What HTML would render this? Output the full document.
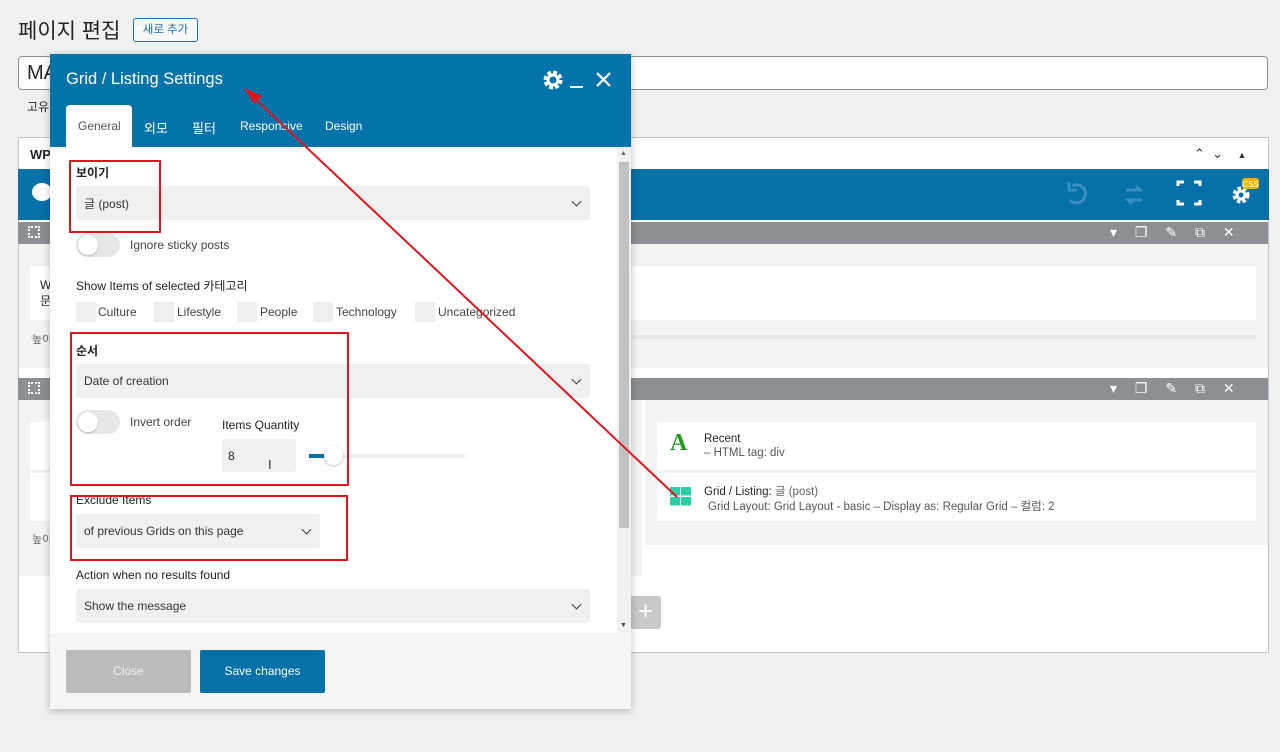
<!DOCTYPE html>
<html><head><meta charset="utf-8"><style>
*{box-sizing:border-box;margin:0;padding:0}
body{width:1280px;height:752px;background:#f0f0f1;font-family:"Liberation Sans","Noto Sans CJK KR",sans-serif;font-size:12px;color:#1d2327;position:relative;overflow:hidden}
.a{position:absolute}
.sel{position:absolute;background:#f0f0f0;border-radius:3px;font-size:12px;color:#333;padding-left:8px;display:flex;align-items:center}
.sel:after{content:"";position:absolute;right:10px;top:50%;width:6px;height:6px;border-right:1.5px solid #333;border-bottom:1.5px solid #333;transform:translateY(-70%) rotate(45deg)}
.lbl{position:absolute;font-size:12px;font-weight:bold;color:#222}
.tog{position:absolute;width:44px;height:24px;border-radius:12px;background:#e6e6e6}
.tog:after{content:"";position:absolute;left:2px;top:2px;width:20px;height:20px;border-radius:50%;background:#fff;box-shadow:0 1px 2px rgba(0,0,0,.2)}
.cb{position:absolute;width:20px;height:20px;background:#eee;top:302px}
.cbt{position:absolute;top:305px;font-size:12px;color:#444}
.red{position:absolute;border:2px solid #e0141e}
.bar{position:absolute;left:18px;width:1250px;height:22px;background:#8c8f94}
.card{position:absolute;background:#fff}
</style></head><body>
<div class="a" style="left:18px;top:15px;font-size:21px;color:#1d2327">페이지 편집</div>
<div class="a" style="left:133px;top:18px;width:65px;height:24px;border:1px solid #2271b1;border-radius:3px;color:#2271b1;font-size:11.5px;text-align:center;line-height:22px;background:#f6f7f7">새로 추가</div>
<div class="a" style="left:18px;top:56px;width:1250px;height:34px;background:#fff;border:1px solid #8c8f94;border-radius:4px;font-size:20px;padding:5px 8px">MA</div>
<div class="a" style="left:27px;top:98px;font-size:12px">고유</div>
<div class="a" style="left:18px;top:137px;width:1251px;height:516px;background:#fff;border:1px solid #c3c4c7"></div>
<div class="a" style="left:30px;top:147px;font-size:13px;font-weight:bold">WPI</div>
<div class="a" style="left:1194px;top:146px;font-size:13px;color:#333">&#8963;&nbsp;&nbsp;&#8964;&nbsp;&nbsp;&nbsp;&nbsp;<span style="font-size:9px">&#9650;</span></div>
<div class="a" style="left:18px;top:169px;width:1251px;height:51px;background:#0571a8"></div>
<div class="a" style="left:32px;top:183px;width:20px;height:18px;border-radius:50%;background:#fff"></div>
<svg class="a" style="left:1060px;top:176px" width="200" height="40" viewBox="0 0 200 40">
<path d="M12 10 A9 9 0 1 1 10 24" fill="none" stroke="#3b8fc0" stroke-width="3"/><path d="M9 6 L9 14 L17 14" fill="none" stroke="#3b8fc0" stroke-width="3"/>
<path d="M66 14 h14 l-4 -4 M82 24 h-14 l4 4" fill="none" stroke="#3b8fc0" stroke-width="3"/>
<path d="M118 10 v-4 h6 M134 6 h6 v4 M140 24 v4 h-6 M124 28 h-6 v-4" fill="none" stroke="#fff" stroke-width="3"/>
<circle cx="181" cy="19" r="6" fill="none" stroke="#fff" stroke-width="5" stroke-dasharray="3 2"/><circle cx="181" cy="19" r="4" fill="none" stroke="#fff" stroke-width="3"/>
<rect x="182" y="2" width="17" height="11" rx="3" fill="#f0b400"/><text x="190.5" y="11" font-size="8" fill="#fff" text-anchor="middle" font-family="Liberation Sans">CSS</text>
</svg>
<div class="bar" style="top:222px"></div>
<div class="bar" style="top:378px"></div>
<div class="a" style="left:28px;top:226px;width:12px;height:12px;border:2px dotted #fff"></div>
<div class="a" style="left:28px;top:382px;width:12px;height:12px;border:2px dotted #fff"></div>
<div class="a" style="left:1110px;top:224px;color:#fff;font-size:14px;word-spacing:14px">▾ ❐ ✎ ⧉ ✕</div>
<div class="a" style="left:1110px;top:380px;color:#fff;font-size:14px;word-spacing:14px">▾ ❐ ✎ ⧉ ✕</div>
<div class="a" style="left:19px;top:244px;width:1249px;height:124px;background:#f3f3f3"></div>
<div class="card" style="left:30px;top:266px;width:1226px;height:54px"></div>
<div class="a" style="left:40px;top:278px;font-size:12px">W<br>문</div>
<div class="a" style="left:30px;top:335px;width:1226px;height:4px;background:#e8e8e8"></div>
<div class="a" style="left:32px;top:331px;font-size:11px;color:#666">높이</div>
<div class="a" style="left:19px;top:400px;width:623px;height:176px;background:#f3f3f3"></div>
<div class="a" style="left:645px;top:400px;width:623px;height:145px;background:#f3f3f3"></div>
<div class="card" style="left:30px;top:422px;width:600px;height:48px"></div>
<div class="card" style="left:30px;top:473px;width:600px;height:48px"></div>
<div class="a" style="left:32px;top:531px;font-size:11px;color:#666">높이</div>
<div class="card" style="left:657px;top:422px;width:599px;height:48px"></div>
<div class="card" style="left:657px;top:473px;width:599px;height:48px"></div>
<div class="a" style="left:670px;top:430px;font-family:'Liberation Serif',serif;font-weight:bold;font-size:24px;color:#1f9a1f">A</div>
<div class="a" style="left:704px;top:433px;font-size:11.5px">Recent</div>
<div class="a" style="left:704px;top:447px;font-size:11.5px;color:#555">– HTML tag: div</div>
<svg class="a" style="left:670px;top:487px" width="22" height="19"><rect x="0" y="0" width="10" height="8.5" fill="#2bcfa5"/><rect x="11" y="0" width="10" height="8.5" fill="#2bcfa5"/><rect x="0" y="10" width="10" height="8.5" fill="#2bcfa5"/><rect x="11" y="10" width="10" height="8.5" fill="#2bcfa5"/></svg>
<div class="a" style="left:704px;top:483px;font-size:11.5px">Grid / Listing: <span style="color:#666">글 (post)</span></div>
<div class="a" style="left:708px;top:498px;font-size:11.5px;color:#555">Grid Layout: Grid Layout - basic – Display as: Regular Grid – 컬럼: 2</div>
<div class="a" style="left:630px;top:596px;width:31px;height:33px;background:#c8c8c8;border-radius:3px;color:#fff;font-size:26px;text-align:center;line-height:31px">+</div>
<div class="a" style="left:50px;top:54px;width:581px;height:655px;background:#f5f5f5;box-shadow:0 2px 8px rgba(0,0,0,.25)"></div>
<div class="a" style="left:50px;top:54px;width:581px;height:93px;background:#0473aa"></div>
<div class="a" style="left:66px;top:70px;font-size:16.5px;color:#fff">Grid / Listing Settings</div>
<svg class="a" style="left:542px;top:68px" width="75" height="24"><circle cx="11" cy="12" r="7" fill="none" stroke="#fff" stroke-width="5" stroke-dasharray="3.5 2"/><circle cx="11" cy="12" r="5" fill="none" stroke="#fff" stroke-width="3"/><path d="M28 19 h13" stroke="#fff" stroke-width="2"/><path d="M55 5 l13 13 M68 5 l-13 13" stroke="#fff" stroke-width="2.2"/></svg>
<div class="a" style="left:66px;top:105px;width:66px;height:43px;background:#fff;border-radius:4px 4px 0 0"></div>
<div class="a" style="left:78px;top:119px;font-size:12px;color:#555">General</div>
<div class="a" style="left:144px;top:118px;font-size:13px;color:#fff">외모</div>
<div class="a" style="left:192px;top:118px;font-size:13px;color:#fff">필터</div>
<div class="a" style="left:240px;top:119px;font-size:12px;color:#fff">Responsive</div>
<div class="a" style="left:325px;top:119px;font-size:12px;color:#fff">Design</div>
<div class="a" style="left:50px;top:147px;width:567px;height:486px;background:#fff"></div>
<div class="a" style="left:617px;top:147px;width:14px;height:486px;background:#f1f1f1"></div>
<div class="a" style="left:619px;top:162px;width:10px;height:366px;background:#c1c1c1"></div>
<div class="a" style="left:620px;top:150px;font-size:7px;color:#666">▲</div>
<div class="a" style="left:620px;top:622px;font-size:7px;color:#444">▼</div>
<div class="lbl" style="left:76px;top:164px">보이기</div>
<div class="sel" style="left:76px;top:186px;width:514px;height:34px">글 (post)</div>
<div class="tog" style="left:76px;top:233px"></div>
<div class="a" style="left:130px;top:238px;font-size:12px;color:#444">Ignore sticky posts</div>
<div class="a" style="left:76px;top:277px;font-size:12px;color:#222">Show Items of selected 카테고리</div>
<div class="cb" style="left:76px"></div><div class="cbt" style="left:98px">Culture</div>
<div class="cb" style="left:154px"></div><div class="cbt" style="left:177px">Lifestyle</div>
<div class="cb" style="left:237px"></div><div class="cbt" style="left:260px">People</div>
<div class="cb" style="left:313px"></div><div class="cbt" style="left:336px">Technology</div>
<div class="cb" style="left:415px"></div><div class="cbt" style="left:438px">Uncategorized</div>
<div class="lbl" style="left:76px;top:342px">순서</div>
<div class="sel" style="left:76px;top:364px;width:514px;height:34px">Date of creation</div>
<div class="tog" style="left:76px;top:410px"></div>
<div class="a" style="left:130px;top:415px;font-size:12px;color:#444">Invert order</div>
<div class="a" style="left:222px;top:418px;font-size:12px;color:#222">Items Quantity</div>
<div class="a" style="left:222px;top:439px;width:74px;height:33px;background:#f0f0f0;border-radius:3px;font-size:12px;padding:10px 6px">8</div>
<div class="a" style="left:268px;top:457px;font-size:13px;color:#333">I</div>
<div class="a" style="left:309px;top:454px;width:156px;height:4px;background:#eee"></div>
<div class="a" style="left:309px;top:454px;width:18px;height:4px;background:#0571a8"></div>
<div class="a" style="left:324px;top:446px;width:19px;height:19px;border-radius:50%;background:#fff;box-shadow:0 1px 3px rgba(0,0,0,.25)"></div>
<div class="lbl" style="left:76px;top:493px;font-weight:normal">Exclude Items</div>
<div class="sel" style="left:76px;top:514px;width:244px;height:34px">of previous Grids on this page</div>
<div class="a" style="left:76px;top:568px;font-size:12px;color:#222">Action when no results found</div>
<div class="sel" style="left:76px;top:589px;width:514px;height:34px">Show the message</div>
<div class="a" style="left:66px;top:650px;width:125px;height:43px;background:#bbb;border-radius:2px;color:#eee;font-size:12px;text-align:center;line-height:43px">Close</div>
<div class="a" style="left:200px;top:650px;width:125px;height:43px;background:#0571a8;border-radius:2px;color:#fff;font-size:12px;text-align:center;line-height:43px">Save changes</div>
<div class="red" style="left:69px;top:160px;width:92px;height:73px"></div>
<div class="red" style="left:70px;top:332px;width:279px;height:154px"></div>
<div class="red" style="left:70px;top:495px;width:278px;height:66px"></div>
<svg class="a" style="left:0;top:0" width="1280" height="752"><line x1="677" y1="497" x2="252" y2="96" stroke="#e0141e" stroke-width="2"/><path d="M244 88 L262 96 L254 104 Z" fill="#e0141e"/></svg>
</body></html>
